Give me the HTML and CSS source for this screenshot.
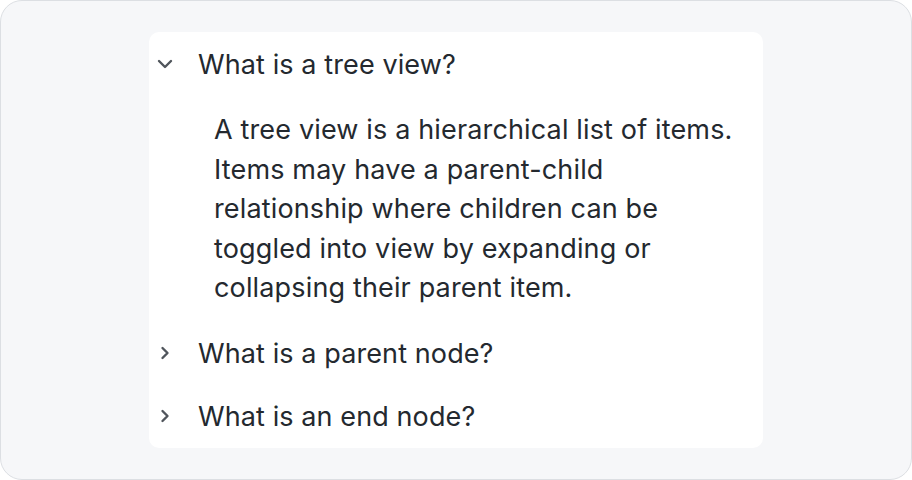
FILE: index.html
```html
<!DOCTYPE html>
<html>
<head>
<meta charset="utf-8">
<link rel="stylesheet" href="styles.css">
</head>
<body>
<div class="frame">
  <div class="panel">
    <div class="item">
      <div class="row">
        <span class="chev">
          <svg width="16" height="16" viewBox="0 0 16 16"><path d="M2 5 L8 11 L14 5" fill="none" stroke="#50555c" stroke-width="2.4" stroke-linecap="round" stroke-linejoin="round"/></svg>
        </span>
        <span class="label">What is a tree view?</span>
      </div>
      <p class="answer">A tree view is a hierarchical list of items. Items may have a parent-child relationship where children can be toggled into view by expanding or collapsing their parent item.</p>
    </div>
    <div class="item">
      <div class="row">
        <span class="chev">
          <svg width="16" height="16" viewBox="0 0 16 16"><path d="M5.5 3 L10.5 8 L5.5 13" fill="none" stroke="#50555c" stroke-width="2.4" stroke-linecap="round" stroke-linejoin="round"/></svg>
        </span>
        <span class="label">What is a parent node?</span>
      </div>
    </div>
    <div class="item">
      <div class="row">
        <span class="chev">
          <svg width="16" height="16" viewBox="0 0 16 16"><path d="M5.5 3 L10.5 8 L5.5 13" fill="none" stroke="#50555c" stroke-width="2.4" stroke-linecap="round" stroke-linejoin="round"/></svg>
        </span>
        <span class="label">What is an end node?</span>
      </div>
    </div>
  </div>
</div>
</body>
</html>
```
FILE: styles.css
```css
* { box-sizing: border-box; }
html, body { margin: 0; padding: 0; }
body {
  width: 912px;
  height: 480px;
  font-family: Inter, "Noto Sans", sans-serif;
  color: #24292f;
}
.frame {
  width: 912px;
  height: 480px;
  background: #f6f7f9;
  border: 1px solid #dcdfe3;
  border-radius: 22px;
  padding: 31px 148px 0 148px;
}
.panel {
  width: 614px;
  background: #ffffff;
  border-radius: 10px;
}
.row {
  display: flex;
  align-items: center;
  height: 63px;
  padding-left: 8px;
}
.chev {
  width: 16px;
  height: 16px;
  display: flex;
  margin-right: 25px;
}
.label {
  font-size: 27px;
  line-height: 34px;
  padding-top: 2px;
  letter-spacing: 0.1px;
}
.answer {
  margin: 0;
  padding: 15px 20px 14px 65px;
  font-size: 27px;
  line-height: 39.5px;
  letter-spacing: 0.15px;
}
```
